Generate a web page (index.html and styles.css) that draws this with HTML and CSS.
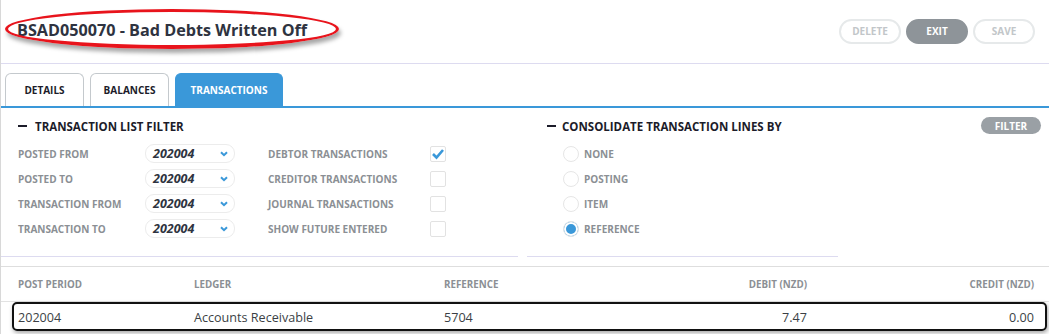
FILE: index.html
```html
<!DOCTYPE html>
<html lang="en">
<head>
    <meta charset="UTF-8">
    <title>BSAD050070 - Bad Debts Written Off</title>
    <link rel="stylesheet" href="styles.css">
</head>
<body>
    <div class="page">
        <div class="header">
            <div class="title-wrap">
                <h1 class="title">BSAD050070 - Bad Debts Written Off</h1>
                <span class="mark-ellipse"></span>
            </div>
            <div class="actions">
                <button class="btn btn-outline">DELETE</button>
                <button class="btn btn-fill">EXIT</button>
                <button class="btn btn-outline">SAVE</button>
            </div>
        </div>

        <div class="tabs">
            <div class="tab">DETAILS</div>
            <div class="tab">BALANCES</div>
            <div class="tab active">TRANSACTIONS</div>
        </div>

        <div class="filters">
            <div class="section section-left">
                <div class="section-title"><span class="dash"></span>TRANSACTION LIST FILTER</div>
                <div class="filter-grid">
                    <div class="label">POSTED FROM</div>
                    <div class="select"><span>202004</span><svg width="8" height="6" viewBox="0 0 8 6"><path d="M1 1.2 L4 4.2 L7 1.2" fill="none" stroke="#3a98d9" stroke-width="2"/></svg></div>
                    <div class="label cb-label">DEBTOR TRANSACTIONS</div>
                    <div class="checkbox"><svg width="14" height="12" viewBox="0 0 14 12"><path d="M2 6 L5.5 9.5 L12 2" fill="none" stroke="#3a98d9" stroke-width="2.6"/></svg></div>

                    <div class="label">POSTED TO</div>
                    <div class="select"><span>202004</span><svg width="8" height="6" viewBox="0 0 8 6"><path d="M1 1.2 L4 4.2 L7 1.2" fill="none" stroke="#3a98d9" stroke-width="2"/></svg></div>
                    <div class="label cb-label">CREDITOR TRANSACTIONS</div>
                    <div class="checkbox"></div>

                    <div class="label">TRANSACTION FROM</div>
                    <div class="select"><span>202004</span><svg width="8" height="6" viewBox="0 0 8 6"><path d="M1 1.2 L4 4.2 L7 1.2" fill="none" stroke="#3a98d9" stroke-width="2"/></svg></div>
                    <div class="label cb-label">JOURNAL TRANSACTIONS</div>
                    <div class="checkbox"></div>

                    <div class="label">TRANSACTION TO</div>
                    <div class="select"><span>202004</span><svg width="8" height="6" viewBox="0 0 8 6"><path d="M1 1.2 L4 4.2 L7 1.2" fill="none" stroke="#3a98d9" stroke-width="2"/></svg></div>
                    <div class="label cb-label">SHOW FUTURE ENTERED</div>
                    <div class="checkbox"></div>
                </div>
            </div>
            <div class="section section-right">
                <div class="section-title"><span class="dash"></span>CONSOLIDATE TRANSACTION LINES BY</div>
                <div class="radio-list">
                    <div class="radio-row"><span class="radio"></span><span class="label">NONE</span></div>
                    <div class="radio-row"><span class="radio"></span><span class="label">POSTING</span></div>
                    <div class="radio-row"><span class="radio"></span><span class="label">ITEM</span></div>
                    <div class="radio-row"><span class="radio checked"></span><span class="label">REFERENCE</span></div>
                </div>
            </div>
            <div class="filter-action">
                <button class="btn-filter">FILTER</button>
            </div>
        </div>

        <div class="table">
            <div class="row head">
                <div>POST PERIOD</div>
                <div>LEDGER</div>
                <div>REFERENCE</div>
                <div class="num">DEBIT (NZD)</div>
                <div class="num">CREDIT (NZD)</div>
            </div>
            <div class="row data">
                <div>202004</div>
                <div>Accounts Receivable</div>
                <div>5704</div>
                <div class="num">7.47</div>
                <div class="num">0.00</div>
                <span class="mark-box"></span>
            </div>
        </div>
    </div>
</body>
</html>
```

FILE: styles.css
```css
body {
    margin: 0;
    font-family: "Open Sans", Arial, sans-serif;
    background-color: white;
    color: #333;
}
.page {
    width: 1049px;
    height: 334px;
    overflow: hidden;
    border-left: 1px solid #d8d8d8;
    box-sizing: border-box;
}
.header {
    height: 63px;
    display: flex;
    justify-content: space-between;
    align-items: center;
    padding: 0 14px 0 16px;
    border-bottom: 1px solid #dddbf0;
}
.title-wrap {
    position: relative;
    margin-top: -3px;
}
.title {
    margin: 0;
    font-size: 16.2px;
    font-weight: 700;
    color: #2e3340;
}
.mark-ellipse {
    position: absolute;
    left: -12px;
    right: -32px;
    top: -10px;
    bottom: -8px;
    border: 3px solid #e8141c;
    border-bottom-width: 4px;
    border-radius: 50%;
    box-shadow: 2px 4px 4px rgba(0,0,0,0.35);
}
.actions {
    display: flex;
    gap: 5px;
    margin-top: -1px;
}
.btn {
    width: 62px;
    height: 25px;
    border-radius: 13px;
    font-family: inherit;
    font-size: 10px;
    font-weight: 700;
    cursor: pointer;
}
.btn-outline {
    background: white;
    border: 2px solid #e6e9ea;
    color: #c2c6c9;
}
.btn-fill {
    background: #8e9499;
    border: 2px solid #8e9499;
    color: white;
}
.tabs {
    display: flex;
    gap: 6px;
    padding: 9px 0 0 4px;
    border-bottom: 2px solid #3a98d9;
}
.tab {
    width: 79px;
    height: 33px;
    box-sizing: border-box;
    border: 1px solid #c4c9cd;
    border-bottom: none;
    border-radius: 6px 6px 0 0;
    display: flex;
    align-items: center;
    justify-content: center;
    font-size: 10px;
    font-weight: 700;
    color: #1c1c2a;
}
.tab.active {
    width: 108px;
    background: #3a98d9;
    border-color: #3a98d9;
    color: white;
}
.filters {
    display: flex;
    padding-top: 10px;
}
.section {
    border-bottom: 1px solid #dddbf0;
    padding-bottom: 15px;
}
.section-left {
    width: 517px;
    padding-left: 17px;
    box-sizing: border-box;
}
.section-right {
    width: 311px;
    margin-left: 9px;
    padding-left: 20px;
    box-sizing: border-box;
}
.section-title {
    display: flex;
    align-items: center;
    height: 16px;
    font-size: 11.5px;
    font-weight: 700;
    color: #1c1c2a;
}
.dash {
    width: 9px;
    height: 2.5px;
    background: #1c1c2a;
    margin-right: 8px;
}
.section-right .dash {
    margin-right: 6px;
}
.filter-grid {
    display: grid;
    grid-template-columns: 127px 90px 33px 162px 16px;
    grid-auto-rows: 25px;
    align-items: center;
    margin-top: 7px;
}
.filter-grid .cb-label {
    grid-column: 4;
}
.label {
    font-size: 10px;
    font-weight: 700;
    color: #8b8f94;
}
.select {
    grid-column: 2;
    height: 19px;
    border: 1px solid #ececec;
    border-radius: 9px;
    box-sizing: border-box;
    display: flex;
    align-items: center;
    justify-content: space-between;
    padding: 0 6px 0 7px;
}
.select span {
    font-size: 12.5px;
    font-weight: 700;
    font-style: italic;
    color: #2e3340;
}
.checkbox {
    grid-column: 5;
    width: 16px;
    height: 16px;
    box-sizing: border-box;
    border: 1px solid #e2e2e2;
    border-radius: 2px;
    display: flex;
    align-items: center;
    justify-content: center;
}
.radio-list {
    margin-top: 7px;
}
.radio-row {
    display: flex;
    align-items: center;
    height: 25px;
    padding-left: 16px;
}
.radio {
    width: 16px;
    height: 16px;
    box-sizing: border-box;
    border: 1px solid #e6e6e6;
    border-radius: 50%;
    margin-right: 5px;
}
.radio.checked {
    background: #3a98d9;
    box-shadow: inset 0 0 0 2px white;
}
.filter-action {
    flex: 1;
    display: flex;
    justify-content: flex-end;
    align-items: flex-start;
    padding-right: 8px;
}
.btn-filter {
    width: 60px;
    height: 17px;
    border: none;
    border-radius: 9px;
    background: #9aa0a5;
    color: white;
    font-family: inherit;
    font-size: 10px;
    font-weight: 700;
    margin-top: -1px;
}
.table {
    margin-top: 9px;
    border-top: 1px solid #dedede;
}
.row {
    display: grid;
    grid-template-columns: 176px 250px 150px 213px 227px;
    align-items: center;
    padding-left: 17px;
}
.row.head {
    height: 34px;
    font-size: 9.8px;
    font-weight: 700;
    color: #8b8f94;
}
.row.data {
    position: relative;
    height: 30px;
    border-top: 1px solid #e2e2e2;
    font-size: 12.6px;
    color: #3b3f45;
}
.num {
    text-align: right;
}
.mark-box {
    position: absolute;
    left: 11px;
    right: 2px;
    top: 0;
    bottom: 1px;
    border: 2.5px solid #111;
    border-radius: 5px;
    box-shadow: 1px 2px 4px rgba(0,0,0,0.35);
}
```
